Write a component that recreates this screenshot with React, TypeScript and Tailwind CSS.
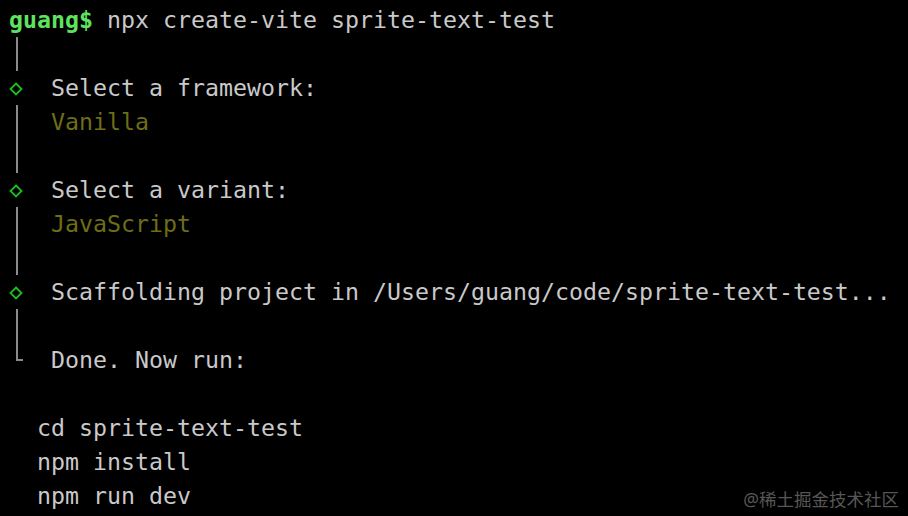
import React from "react";

type Gutter = "none" | "bar" | "diamond" | "corner";

const mono = { fontFamily: '"DejaVu Sans Mono", "Liberation Mono", monospace' };

function GutterCell({ kind }: { kind: Gutter }) {
  return (
    <div className="w-[14px] h-full flex-none relative">
      {kind === "bar" && <div className="ml-[7px] w-[2px] h-full bg-[#8a8a8a]" />}
      {kind === "diamond" && (
        <svg width="14" height="14" viewBox="0 0 14 14" className="absolute left-[0px] top-[11px]">
          <path d="M7 1.5 L12.5 7 L7 12.5 L1.5 7 Z" fill="none" stroke="#1cbf1c" strokeWidth="1.8" />
        </svg>
      )}
      {kind === "corner" && (
        <div className="ml-[7px] w-[7px] h-[18px] border-l-2 border-b-2 border-[#8a8a8a]" />
      )}
    </div>
  );
}

function Row({ g, children, color = "text-[#c9c9c9]" }: { g: Gutter; children?: React.ReactNode; color?: string }) {
  return (
    <div className="h-[34px] flex items-stretch">
      <GutterCell kind={g} />
      <div className={`ml-[28px] leading-[34px] whitespace-pre ${color}`}>{children}</div>
    </div>
  );
}

export default function App() {
  return (
    <div
      className="relative w-[908px] h-[516px] overflow-hidden bg-black pt-[3px] pl-[9px] text-[23.25px] text-[#c9c9c9]"
      style={mono}
    >
      <div className="h-[34px] leading-[34px] whitespace-pre">
        <span className="font-bold text-[#5fe35f]">guang$</span> npx create-vite sprite-text-test
      </div>
      <Row g="bar" />
      <Row g="diamond">Select a framework:</Row>
      <Row g="bar" color="text-[#6e6e16]">Vanilla</Row>
      <Row g="bar" />
      <Row g="diamond">Select a variant:</Row>
      <Row g="bar" color="text-[#6e6e16]">JavaScript</Row>
      <Row g="bar" />
      <Row g="diamond">Scaffolding project in /Users/guang/code/sprite-text-test...</Row>
      <Row g="bar" />
      <Row g="corner">Done. Now run:</Row>
      <div className="h-[34px]" />
      <div className="h-[34px] leading-[34px] whitespace-pre">  cd sprite-text-test</div>
      <div className="h-[34px] leading-[34px] whitespace-pre">  npm install</div>
      <div className="h-[34px] leading-[34px] whitespace-pre">  npm run dev</div>
      <div
        className="absolute right-[9px] bottom-[6px] text-[17.5px] leading-[22px] text-[#575757]"
        style={{ fontFamily: '"Noto Sans", "Noto Sans CJK SC", sans-serif' }}
      >
        @稀土掘金技术社区
      </div>
    </div>
  );
}
